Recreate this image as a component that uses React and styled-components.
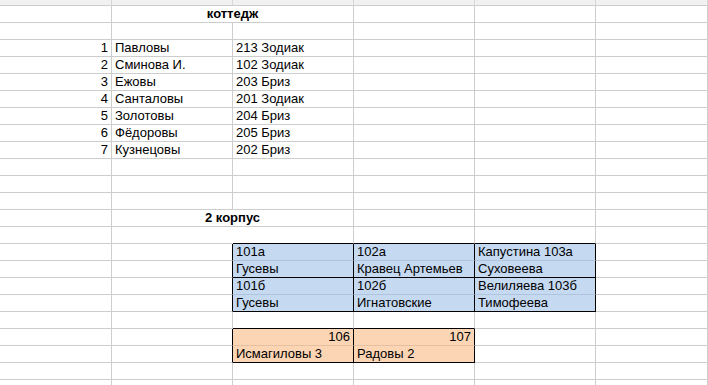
import React from 'react';
import styled, { createGlobalStyle } from 'styled-components';

const GRID = '#cdcdcd';
const BLACK = '#000';
const BLUE = '#c5d9f1';
const BLUE_LINE = '#b0c4de';
const ORANGE = '#fcd5b4';
const ORANGE_LINE = '#e6c0a0';

const Global = createGlobalStyle`
  html, body { margin: 0; padding: 0; background: #fff; overflow: hidden; }
  body { font-family: "Liberation Sans", Arial, sans-serif; }
`;

const Sheet = styled.div`
  display: grid;
  grid-template-columns: 112px repeat(4, 121px) 1fr;
  grid-template-rows: 6px;
  grid-auto-rows: 17px;
  width: 708px;
  height: 385px;
  overflow: hidden;
  font-size: 13px;
  color: #000;
`;

const HeaderStrip = styled.div`
  box-sizing: border-box;
  background: #f1f1f1;
  border-right: 1px solid #d8d8d8;
  border-bottom: 1px solid ${GRID};
`;

const Cell = styled.div`
  box-sizing: border-box;
  grid-column: span ${(p) => p.$span || 1};
  background: ${(p) => p.$bg || 'transparent'};
  border-right: 1px solid ${(p) => p.$r || GRID};
  border-bottom: 1px solid ${(p) => p.$b || GRID};
  padding: 0 3px;
  line-height: 16px;
  white-space: nowrap;
  overflow: hidden;
  text-align: ${(p) => p.$align || 'left'};
  font-weight: ${(p) => (p.$bold ? 700 : 400)};
`;

const ROWS = 23;
const COLS = 6;

function buildRows() {
  const rows = Array.from({ length: ROWS }, () =>
    Array.from({ length: COLS }, () => ({}))
  );

  // merged titles
  rows[0][1] = { text: 'коттедж', span: 2, align: 'center', bold: true };
  rows[0][2] = { skip: true };
  rows[12][1] = { text: '2 корпус', span: 2, align: 'center', bold: true };
  rows[12][2] = { skip: true };
  rows[13][1] = { r: 'transparent' };

  const cottage = [
    ['Павловы', '213 Зодиак'],
    ['Сминова И.', '102 Зодиак'],
    ['Ежовы', '203 Бриз'],
    ['Санталовы', '201 Зодиак'],
    ['Золотовы', '204 Бриз'],
    ['Фёдоровы', '205 Бриз'],
    ['Кузнецовы', '202 Бриз'],
  ];
  cottage.forEach(([name, room], i) => {
    rows[2 + i][0] = { text: String(i + 1), align: 'right' };
    rows[2 + i][1] = { text: name };
    rows[2 + i][2] = { text: room };
  });

  // blue block
  const blue = [
    ['101а', '102а', 'Капустина 103а'],
    ['Гусевы', 'Кравец Артемьев', 'Суховеева'],
    ['101б', '102б', 'Велиляева 103б'],
    ['Гусевы', 'Игнатовские', 'Тимофеева'],
  ];
  for (let c = 2; c <= 4; c++) rows[13][c] = { ...rows[13][c], b: BLACK };
  blue.forEach((line, i) => {
    const r = 14 + i;
    rows[r][1] = { ...rows[r][1], r: BLACK };
    line.forEach((text, j) => {
      rows[r][2 + j] = {
        text,
        bg: BLUE,
        r: BLACK,
        b: i % 2 === 1 ? BLACK : BLUE_LINE,
      };
    });
  });

  // orange block
  const orange = [
    [
      { text: '106', align: 'right' },
      { text: '107', align: 'right' },
    ],
    [{ text: 'Исмагиловы 3' }, { text: 'Радовы 2' }],
  ];
  for (let c = 2; c <= 3; c++) rows[18][c] = { ...rows[18][c], b: BLACK };
  orange.forEach((line, i) => {
    const r = 19 + i;
    rows[r][1] = { ...rows[r][1], r: BLACK };
    line.forEach((cell, j) => {
      rows[r][2 + j] = {
        ...cell,
        bg: ORANGE,
        r: BLACK,
        b: i === 1 ? BLACK : ORANGE_LINE,
      };
    });
  });

  return rows;
}

const rows = buildRows();

export default function App() {
  return (
    <>
      <Global />
      <Sheet>
        {Array.from({ length: COLS }, (_, c) => (
          <HeaderStrip key={`h${c}`} />
        ))}
        {rows.map((row, r) =>
          row.map((cell, c) =>
            cell.skip ? null : (
              <Cell
                key={`${r}-${c}`}
                $span={cell.span}
                $bg={cell.bg}
                $r={cell.r}
                $b={cell.b}
                $align={cell.align}
                $bold={cell.bold}
              >
                {cell.text}
              </Cell>
            )
          )
        )}
      </Sheet>
    </>
  );
}
